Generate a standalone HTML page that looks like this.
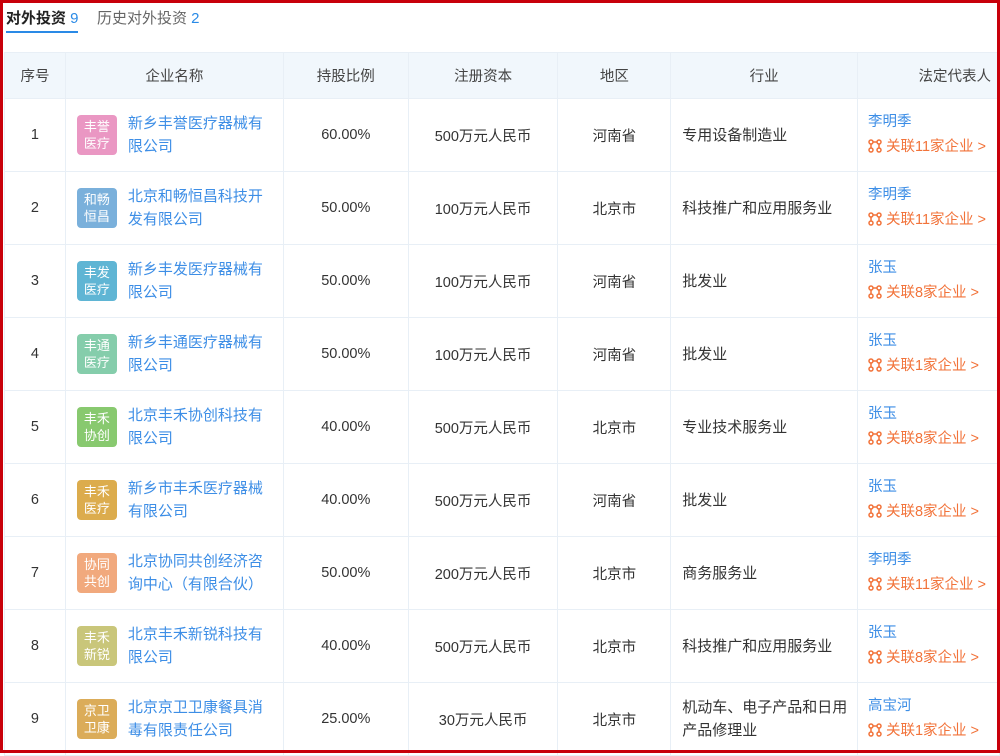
<!DOCTYPE html>
<html><head><meta charset="utf-8"><style>
*{margin:0;padding:0;box-sizing:border-box}
body{width:1000px;height:753px;overflow:hidden;background:#fff;font-family:"Liberation Sans","Noto Sans CJK SC",sans-serif;font-size:14.5px;color:#333;position:relative}
.frame{position:absolute;left:0;top:0;width:1000px;height:753px;border:3px solid #c8000a;pointer-events:none;z-index:5}
.tab{position:absolute;top:7px;font-size:15px}
.t1{left:6px;color:#222;font-weight:bold}
.t1 b,.t2 b{color:#2a8ae6;font-weight:normal}
.t2{left:97px;color:#666}
.ul{position:absolute;left:6px;top:31px;width:72px;height:2px;background:#2a8ae6}
table{position:absolute;left:4px;top:52px;border-collapse:collapse;table-layout:fixed}
td,th{border:1px solid #e8eff6;text-align:center;vertical-align:middle}
th{background:#f1f7fc;height:46px;font-weight:normal;color:#444}
td{height:73px}
.nm{text-align:left;padding-left:11px}
.nm div{display:flex;align-items:center}
.logo{width:40px;height:40px;border-radius:4px;color:#fff;font-size:13px;line-height:17px;text-align:center;padding-top:3px;flex:none;margin-right:11px;opacity:.9}
.cn{color:#3d8ee6;line-height:23px;width:136px;font-size:15px}
.ind{text-align:left;padding-left:11px;line-height:23px;font-size:15px}
.rep{text-align:left;padding-left:10px;line-height:25px}
.rep .p{color:#3d8ee6}
.rep .l{color:#f2733a;white-space:nowrap}
.ic{display:inline-block;width:14px;height:14px;vertical-align:-2px;margin-right:4px}
</style></head><body>
<div class="frame"></div>
<div class="tab t1">对外投资 <b>9</b></div>
<div class="tab t2">历史对外投资 <b>2</b></div>
<div class="ul"></div>
<table>
<colgroup><col style="width:61px"><col style="width:218px"><col style="width:125px"><col style="width:150px"><col style="width:113px"><col style="width:187px"><col style="width:142px"></colgroup>
<tr><th>序号</th><th>企业名称</th><th>持股比例</th><th>注册资本</th><th>地区</th><th>行业</th><th style="text-align:right;padding-right:8px">法定代表人</th></tr>
<tr><td>1</td><td class="nm"><div><span class="logo" style="background:#e88cbd">丰誉<br>医疗</span><span class="cn">新乡丰誉医疗器械有限公司</span></div></td><td>60.00%</td><td>500万元人民币</td><td>河南省</td><td class="ind">专用设备制造业</td><td class="rep"><div class="p">李明季</div><div class="l"><svg class="ic" viewBox="0 0 14 14" fill="none" stroke="#f2733a" stroke-width="1.5"><circle cx="3" cy="3" r="2"/><circle cx="11" cy="3" r="2"/><circle cx="3" cy="11" r="2"/><circle cx="11" cy="11" r="2"/><path d="M5 3h4M3 5v4M11 5v4"/></svg>关联11家企业 &gt;</div></td></tr>
<tr><td>2</td><td class="nm"><div><span class="logo" style="background:#6ca8d8">和畅<br>恒昌</span><span class="cn">北京和畅恒昌科技开发有限公司</span></div></td><td>50.00%</td><td>100万元人民币</td><td>北京市</td><td class="ind">科技推广和应用服务业</td><td class="rep"><div class="p">李明季</div><div class="l"><svg class="ic" viewBox="0 0 14 14" fill="none" stroke="#f2733a" stroke-width="1.5"><circle cx="3" cy="3" r="2"/><circle cx="11" cy="3" r="2"/><circle cx="3" cy="11" r="2"/><circle cx="11" cy="11" r="2"/><path d="M5 3h4M3 5v4M11 5v4"/></svg>关联11家企业 &gt;</div></td></tr>
<tr><td>3</td><td class="nm"><div><span class="logo" style="background:#4eaed0">丰发<br>医疗</span><span class="cn">新乡丰发医疗器械有限公司</span></div></td><td>50.00%</td><td>100万元人民币</td><td>河南省</td><td class="ind">批发业</td><td class="rep"><div class="p">张玉</div><div class="l"><svg class="ic" viewBox="0 0 14 14" fill="none" stroke="#f2733a" stroke-width="1.5"><circle cx="3" cy="3" r="2"/><circle cx="11" cy="3" r="2"/><circle cx="3" cy="11" r="2"/><circle cx="11" cy="11" r="2"/><path d="M5 3h4M3 5v4M11 5v4"/></svg>关联8家企业 &gt;</div></td></tr>
<tr><td>4</td><td class="nm"><div><span class="logo" style="background:#78c8a2">丰通<br>医疗</span><span class="cn">新乡丰通医疗器械有限公司</span></div></td><td>50.00%</td><td>100万元人民币</td><td>河南省</td><td class="ind">批发业</td><td class="rep"><div class="p">张玉</div><div class="l"><svg class="ic" viewBox="0 0 14 14" fill="none" stroke="#f2733a" stroke-width="1.5"><circle cx="3" cy="3" r="2"/><circle cx="11" cy="3" r="2"/><circle cx="3" cy="11" r="2"/><circle cx="11" cy="11" r="2"/><path d="M5 3h4M3 5v4M11 5v4"/></svg>关联1家企业 &gt;</div></td></tr>
<tr><td>5</td><td class="nm"><div><span class="logo" style="background:#7cc460">丰禾<br>协创</span><span class="cn">北京丰禾协创科技有限公司</span></div></td><td>40.00%</td><td>500万元人民币</td><td>北京市</td><td class="ind">专业技术服务业</td><td class="rep"><div class="p">张玉</div><div class="l"><svg class="ic" viewBox="0 0 14 14" fill="none" stroke="#f2733a" stroke-width="1.5"><circle cx="3" cy="3" r="2"/><circle cx="11" cy="3" r="2"/><circle cx="3" cy="11" r="2"/><circle cx="11" cy="11" r="2"/><path d="M5 3h4M3 5v4M11 5v4"/></svg>关联8家企业 &gt;</div></td></tr>
<tr><td>6</td><td class="nm"><div><span class="logo" style="background:#d9a43a">丰禾<br>医疗</span><span class="cn">新乡市丰禾医疗器械有限公司</span></div></td><td>40.00%</td><td>500万元人民币</td><td>河南省</td><td class="ind">批发业</td><td class="rep"><div class="p">张玉</div><div class="l"><svg class="ic" viewBox="0 0 14 14" fill="none" stroke="#f2733a" stroke-width="1.5"><circle cx="3" cy="3" r="2"/><circle cx="11" cy="3" r="2"/><circle cx="3" cy="11" r="2"/><circle cx="11" cy="11" r="2"/><path d="M5 3h4M3 5v4M11 5v4"/></svg>关联8家企业 &gt;</div></td></tr>
<tr><td>7</td><td class="nm"><div><span class="logo" style="background:#f0a070">协同<br>共创</span><span class="cn">北京协同共创经济咨询中心（有限合伙）</span></div></td><td>50.00%</td><td>200万元人民币</td><td>北京市</td><td class="ind">商务服务业</td><td class="rep"><div class="p">李明季</div><div class="l"><svg class="ic" viewBox="0 0 14 14" fill="none" stroke="#f2733a" stroke-width="1.5"><circle cx="3" cy="3" r="2"/><circle cx="11" cy="3" r="2"/><circle cx="3" cy="11" r="2"/><circle cx="11" cy="11" r="2"/><path d="M5 3h4M3 5v4M11 5v4"/></svg>关联11家企业 &gt;</div></td></tr>
<tr><td>8</td><td class="nm"><div><span class="logo" style="background:#c4c06c">丰禾<br>新锐</span><span class="cn">北京丰禾新锐科技有限公司</span></div></td><td>40.00%</td><td>500万元人民币</td><td>北京市</td><td class="ind">科技推广和应用服务业</td><td class="rep"><div class="p">张玉</div><div class="l"><svg class="ic" viewBox="0 0 14 14" fill="none" stroke="#f2733a" stroke-width="1.5"><circle cx="3" cy="3" r="2"/><circle cx="11" cy="3" r="2"/><circle cx="3" cy="11" r="2"/><circle cx="11" cy="11" r="2"/><path d="M5 3h4M3 5v4M11 5v4"/></svg>关联8家企业 &gt;</div></td></tr>
<tr><td>9</td><td class="nm"><div><span class="logo" style="background:#d8a448">京卫<br>卫康</span><span class="cn">北京京卫卫康餐具消毒有限责任公司</span></div></td><td>25.00%</td><td>30万元人民币</td><td>北京市</td><td class="ind">机动车、电子产品和日用产品修理业</td><td class="rep"><div class="p">高宝河</div><div class="l"><svg class="ic" viewBox="0 0 14 14" fill="none" stroke="#f2733a" stroke-width="1.5"><circle cx="3" cy="3" r="2"/><circle cx="11" cy="3" r="2"/><circle cx="3" cy="11" r="2"/><circle cx="11" cy="11" r="2"/><path d="M5 3h4M3 5v4M11 5v4"/></svg>关联1家企业 &gt;</div></td></tr>
</table>
</body></html>
